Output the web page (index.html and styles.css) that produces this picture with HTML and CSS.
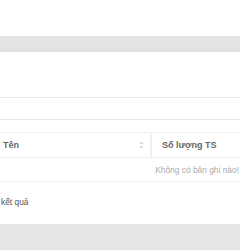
FILE: index.html
```html
<!DOCTYPE html>
<html lang="vi">
<head>
    <meta charset="UTF-8">
    <meta name="viewport" content="width=device-width, initial-scale=1.0">
    <title>Danh sách tài sản</title>
    <link rel="stylesheet" href="styles.css">
</head>
<body>
    <header class="topbar"></header>

    <main class="page">
        <section class="card">
            <div class="card-head"></div>
            <div class="filter-row"></div>

            <table class="data-table">
                <thead>
                    <tr>
                        <th class="col-name">
                            <span>Tên</span>
                            <svg class="sort" width="5" height="8" viewBox="0 0 5 8">
                                <path d="M2.5 0.5 L4.5 3 H0.5 Z" fill="#d4d4d8"/>
                                <path d="M2.5 7.5 L4.5 5 H0.5 Z" fill="#d4d4d8"/>
                            </svg>
                        </th>
                        <th class="col-qty">Số lượng TS</th>
                    </tr>
                </thead>
                <tbody>
                    <tr class="empty-row">
                        <td colspan="2">Không có bản ghi nào!</td>
                    </tr>
                </tbody>
            </table>

            <div class="card-foot">kết quả</div>
        </section>
    </main>
</body>
</html>
```

FILE: styles.css
```css
body {
    margin: 0;
    font-family: "Liberation Sans", Arial, sans-serif;
    font-size: 8.4px;
    color: #555;
    background-color: #e5e5e5;
}
.topbar {
    height: 36px;
    background-color: #fff;
}
.page {
    padding-top: 16px;
    background-color: #e3e3e3;
}
.card {
    background-color: #fff;
    height: 172px;
    overflow: hidden;
    box-shadow: 0 1px 3px rgba(0,0,0,0.1);
}
.card-head {
    height: 45px;
    border-bottom: 1px solid #e8e8e8;
}
.filter-row {
    height: 21px;
    border-bottom: 1px solid #e8e8e8;
    margin-bottom: 12px;
}
.data-table {
    width: 100%;
    border-collapse: collapse;
}
.data-table th {
    height: 24px;
    padding: 0;
    text-align: left;
    font-size: 9px;
    font-weight: bold;
    color: #666;
    border-top: 1px solid #efeff1;
    border-bottom: 1px solid #efeff1;
}
.col-name {
    width: 147px;
    padding-left: 3px !important;
    border-right: 2px solid #f0f0f2;
}
.col-name span {
    float: left;
}
.sort {
    float: right;
    margin-right: 6px;
    margin-top: 1px;
}
.col-qty {
    padding-left: 10px !important;
}
.empty-row td {
    height: 23px;
    padding: 0 1px 0 0;
    text-align: right;
    color: #aaa;
    border-bottom: 1px solid #f0f0f0;
}
.card-foot {
    padding: 14px 1px;
    line-height: 12px;
}
```
